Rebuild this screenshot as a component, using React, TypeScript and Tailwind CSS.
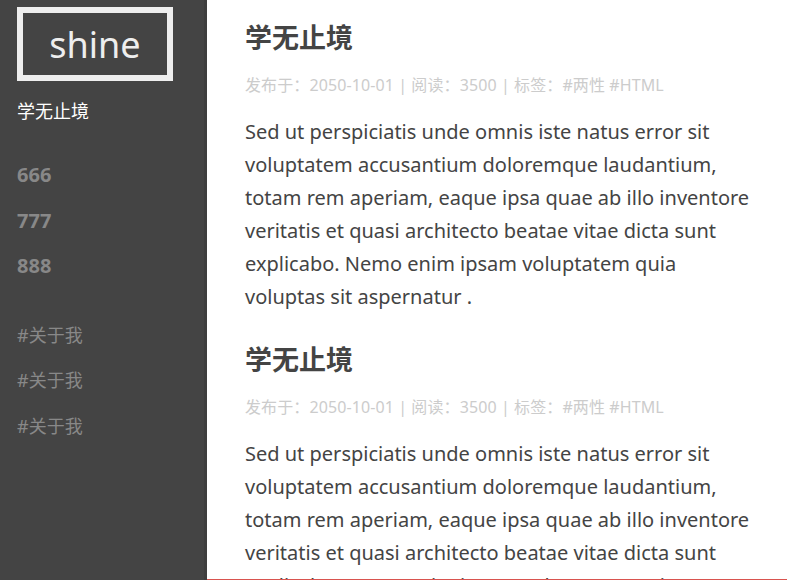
import React from "react";

const para =
  "Sed ut perspiciatis unde omnis iste natus error sit voluptatem accusantium doloremque laudantium, totam rem aperiam, eaque ipsa quae ab illo inventore veritatis et quasi architecto beatae vitae dicta sunt explicabo. Nemo enim ipsam voluptatem quia voluptas sit aspernatur .";

function Article() {
  return (
    <div className="pb-[9.5px]">
      <h2 className="text-[27px] leading-[40px] font-bold text-[#444] pt-[18px]">学无止境</h2>
      <div className="mt-[15px] text-[16px] leading-[24px] text-[#ccc] tracking-[0.1px]">
        发布于：2050-10-01 | 阅读：3500 | 标签：#两性 #HTML
      </div>
      <p className="mt-[17.5px] text-[20px] leading-[33px] text-[#444] w-[512px]">{para}</p>
    </div>
  );
}

export default function App() {
  return (
    <div
      className="flex h-[580px] w-[787px] overflow-hidden bg-white"
      style={{ fontFamily: '"Noto Sans", "Noto Sans CJK SC", sans-serif' }}
    >
      <aside className="w-[207px] shrink-0 h-full bg-[#444] border-r-[3px] border-[#3e3e3e]">
        <div className="ml-[17px] mt-[7px] w-[156px] h-[74px] border-[6px] border-[#eee] flex items-center justify-center text-[36px] text-[#eee] leading-none pt-[2px]">
          shine
        </div>
        <div className="ml-[17px] mt-[15px] text-[18px] leading-[30px] text-white">学无止境</div>
        <ul className="ml-[17px] mt-[26px]">
          {["666", "777", "888"].map((n) => (
            <li key={n} className="text-[20px] leading-[45.5px] font-bold text-[#888]">
              {n}
            </li>
          ))}
        </ul>
        <ul className="ml-[17px] mt-[24px]">
          {[0, 1, 2].map((i) => (
            <li key={i} className="text-[18px] leading-[45.5px] text-[#888]">
              #关于我
            </li>
          ))}
        </ul>
      </aside>
      <main className="flex-1 h-full overflow-hidden pl-[38px] border-b border-[#d9534f]">
        <Article />
        <Article />
      </main>
    </div>
  );
}
